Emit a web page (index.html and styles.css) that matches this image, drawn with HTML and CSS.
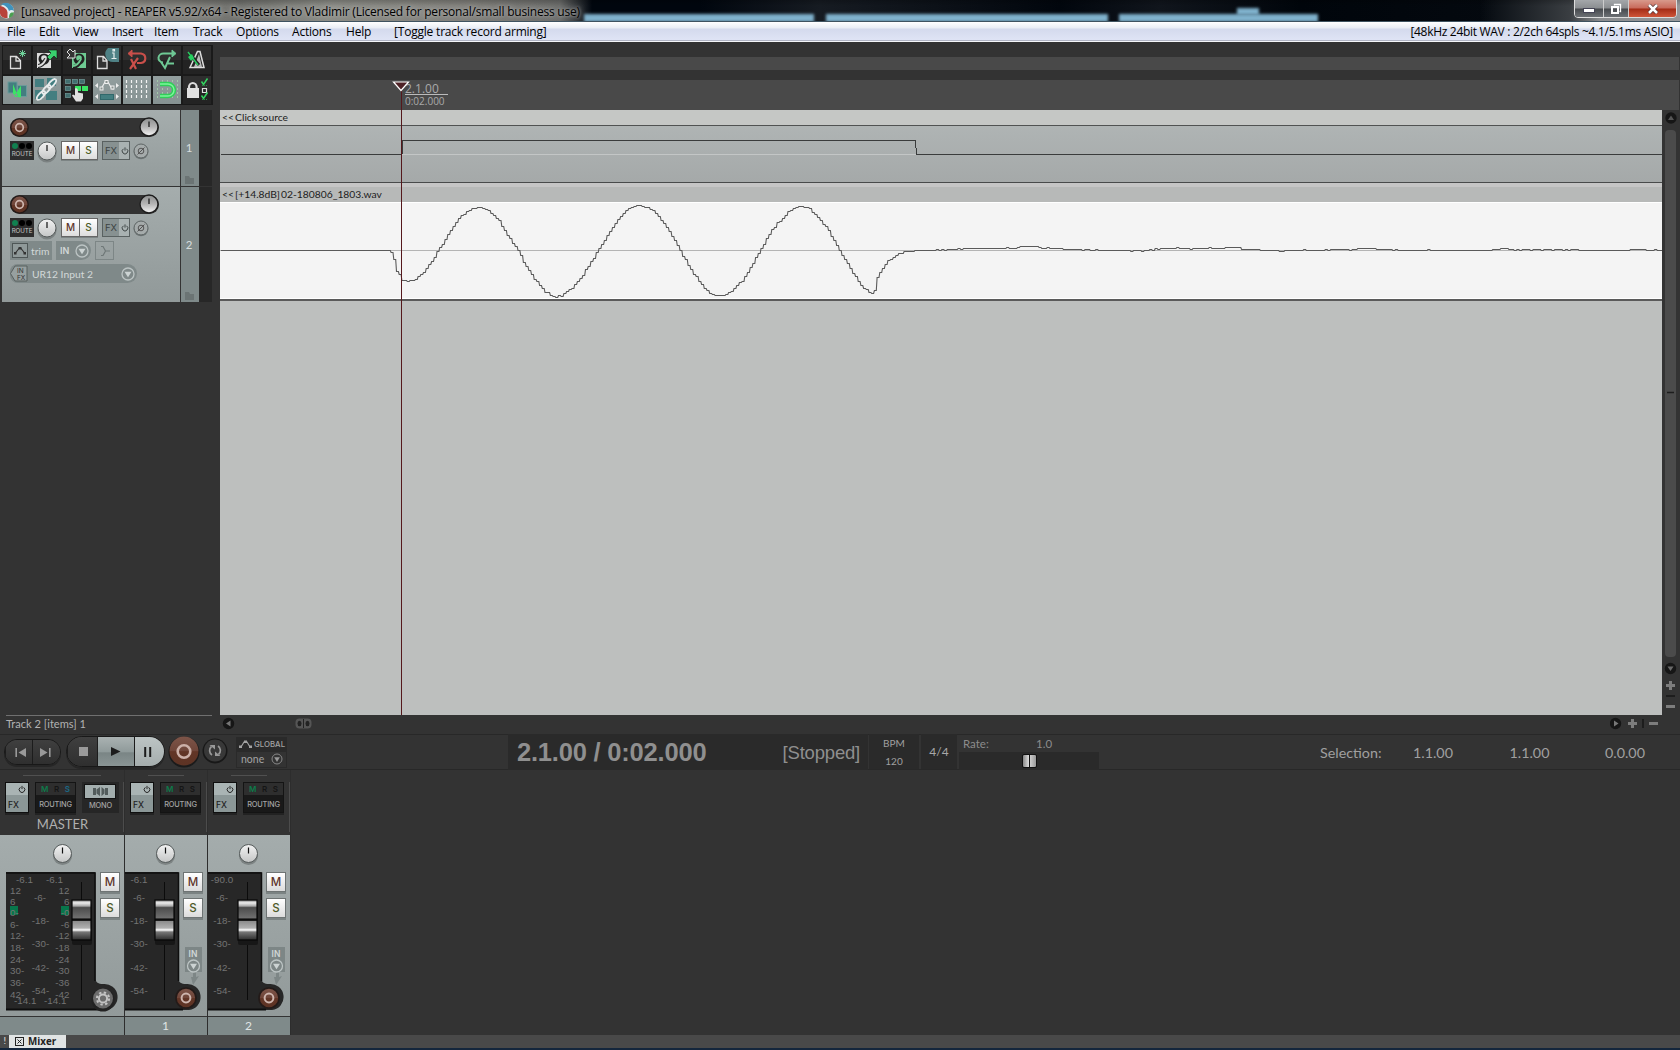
FILE: index.html
```html
<!DOCTYPE html>
<html lang="en">
<head>
<meta charset="utf-8">
<title>[unsaved project] - REAPER v5.92/x64</title>
<link rel="stylesheet" href="styles.css">
</head>
<body>
<svg class="defs" width="0" height="0">
  <defs>
    <linearGradient id="knobGrad" x1="0" y1="0" x2="0" y2="1"><stop offset="0" stop-color="#f2f2f2"/><stop offset="1" stop-color="#c4c6c6"/></linearGradient>
    <linearGradient id="volGrad" x1="0" y1="0" x2="0" y2="1"><stop offset="0" stop-color="#8d8f8f"/><stop offset=".5" stop-color="#b5b5b5"/><stop offset="1" stop-color="#f6f6f6"/></linearGradient>
    <linearGradient id="recGrad" x1="0" y1="0" x2="0" y2="1"><stop offset="0" stop-color="#7d5549"/><stop offset=".5" stop-color="#6f4539"/><stop offset=".52" stop-color="#623526"/><stop offset="1" stop-color="#5d3324"/></linearGradient>
    <linearGradient id="fadGrad" x1="0" y1="0" x2="0" y2="1"><stop offset="0" stop-color="#777"/><stop offset=".07" stop-color="#eee"/><stop offset=".15" stop-color="#aaa"/><stop offset=".19" stop-color="#4c4c4c"/><stop offset=".44" stop-color="#6e6e6e"/><stop offset=".48" stop-color="#0c0c0c"/><stop offset=".51" stop-color="#0c0c0c"/><stop offset=".53" stop-color="#8c8c8c"/><stop offset=".7" stop-color="#b0b0b0"/><stop offset=".75" stop-color="#fff"/><stop offset=".8" stop-color="#777"/><stop offset="1" stop-color="#2c2c2c"/></linearGradient>
    <symbol id="knob" viewBox="0 0 20 22"><ellipse cx="10" cy="12" rx="9.6" ry="9.6" fill="#6d7474" opacity=".7"/><circle cx="10" cy="10" r="9" fill="url(#knobGrad)" stroke="#555b5b"/><path d="M10 4v6" stroke="#111" stroke-width="1.2"/></symbol>
    <symbol id="volknob" viewBox="0 0 20 22"><circle cx="10" cy="10" r="9" fill="url(#volGrad)" stroke="#1d1d1d" stroke-width="1.4"/><path d="M10 4.500v5.500" stroke="#111" stroke-width="1.2"/></symbol>
    <symbol id="rec" viewBox="0 0 22 22"><circle cx="11" cy="11" r="10" fill="url(#recGrad)" stroke="#231a18" stroke-width="1.6"/><circle cx="11" cy="11" r="4.400" fill="none" stroke="#cdb5ae" stroke-width="2"/></symbol>
    <symbol id="drop" viewBox="0 0 14 14"><circle cx="7" cy="7" r="6" fill="none" stroke="#bcc4c4" stroke-width="1.300"/><path d="M3.500 4.800h7L7 10.200z" fill="#ccd3d3"/></symbol>
    <symbol id="power" viewBox="0 0 10 10"><path d="M3 2.300a3.500 3.500 0 1 0 4 0M5 .5v4" fill="none" stroke="currentColor" stroke-width="1.200"/></symbol>
    <symbol id="folder" viewBox="0 0 9 8"><path d="M0 0h4l1 2h4v6H0z" fill="#6b7474"/></symbol>
    <symbol id="fader" viewBox="0 0 22 46"><rect x="1" y="4" width="20" height="42" rx="2" fill="#171717"/><rect x="1" y="1" width="19" height="40" fill="url(#fadGrad)" stroke="#080808" stroke-width="1.200"/></symbol>
  </defs>
</svg>

<header class="titlebar">
  <svg class="logo" width="18" height="21" viewBox="0 0 18 21"><circle cx="6.500" cy="11" r="7.500" fill="#e4ecee"/><path d="M1 4.500C6 1.500 13 3 14 11c-1.500-1.500-3.500-1.500-5 0C8 7.500 5 5 1 4.500z" fill="#3f93bd"/><path d="M0 6c4 .5 7 3 7.500 6.500V18C3 18.500 0 16 0 13z" fill="#b8433a"/><path d="M9 18c0-4 1-6 5-5.500-.5 3-2 5-5 5.500z" fill="#4a9e50"/></svg>
  <span class="title">[unsaved project] - REAPER v5.92/x64 - Registered to Vladimir (Licensed for personal/small business use)</span>
  <i class="glow g1"></i><i class="glow g2"></i><i class="glow g3"></i><i class="glow g4"></i>
  <div class="wincontrols">
    <b class="wmin"><svg width="12" height="6"><rect x=".5" y=".5" width="11" height="4" fill="#fff" stroke="#445"/></svg></b>
    <b class="wmax"><svg width="12" height="12"><path d="M4.500 2.500V1.500h6v7h-1" fill="none" stroke="#fff" stroke-width="1.300"/><rect x="2" y="4" width="6" height="6" fill="none" stroke="#fff" stroke-width="2"/></svg></b>
    <b class="wclose"><svg width="12" height="10"><path d="M2 1l8 8M10 1l-8 8" stroke="#533" stroke-width="4"/><path d="M2 1l8 8M10 1l-8 8" stroke="#fff" stroke-width="2.500"/></svg></b>
  </div>
</header>

<nav class="menubar">
  <span class="m1">File</span><span class="m2">Edit</span><span class="m3">View</span><span class="m4">Insert</span><span class="m5">Item</span><span class="m6">Track</span><span class="m7">Options</span><span class="m8">Actions</span><span class="m9">Help</span><span class="m10">[Toggle track record arming]</span>
  <span class="audio">[48kHz 24bit WAV : 2/2ch 64spls ~4.1/5.1ms ASIO]</span>
</nav>

<main class="workspace">
  <aside class="left">
    <div class="toolbar">
      <b><svg viewBox="0 0 28 28"><path d="M7.500 10.500h6l4 4v8h-10zM13 10.500v4.500h4.500" fill="#333" stroke="#ddd" stroke-width="1.300"/><path d="M19.500 4v7M16 7.500h7M17 5l5 5M22 5l-5 5" stroke="#6fd39a"/></svg></b>
      <b><svg viewBox="0 0 28 28"><path d="M4 7h14v15H4z" fill="#ddd"/><circle cx="11" cy="13" r="5.500" fill="#222"/><circle cx="11" cy="12" r="2.800" fill="#ddd"/><path d="M5 20c3 0 6-3 8-7" stroke="#222" stroke-width="4" fill="none"/><path d="M5 20c3 0 6-3 8-7" stroke="#ddd" stroke-width="1.800" fill="none"/><path d="M15 4h9v9l-3-3-4 4-3-3 4-4z" fill="#39d06e" stroke="#111" stroke-width=".6"/></svg></b>
      <b><svg viewBox="0 0 28 28"><path d="M9 7h14v15H9z" fill="#6ecb92"/><circle cx="16" cy="13" r="5.500" fill="#222"/><circle cx="16" cy="12" r="2.800" fill="#6ecb92"/><path d="M10 21c3 0 6-3 8-7" stroke="#222" stroke-width="4" fill="none"/><path d="M10 20c3 0 6-3 8-7" stroke="#6ecb92" stroke-width="1.800" fill="none"/><path d="M12 4v8H4l3-3-3-3 3-3 3 3z" fill="#333" stroke="#ddd"/></svg></b>
      <b><svg viewBox="0 0 28 28"><path d="M4.500 10.500h6l3.500 4v8H4.500zM10 10.500v4.500h4" fill="#333" stroke="#ddd" stroke-width="1.300"/><path d="M26 2v14h-6a8 8 0 0 1-5-14z" fill="#4f8185"/><path d="M19 7h2v5M18.500 12.500h5M20 3.500h1.500v1.500H20z" stroke="#e5eeee" stroke-width="1.200" fill="none"/></svg></b>
      <b><svg viewBox="0 0 28 28"><path d="M6 7.500h12a5 4.800 0 0 1 0 9.500h-4" fill="none" stroke="#c94f4a" stroke-width="2.200"/><path d="M9 4v7L5 7.500z" fill="#c94f4a" stroke="#c94f4a"/><path d="M8 13l5 10M15 12L7 23" stroke="#c94f4a" stroke-width="2.200"/></svg></b>
      <b><svg viewBox="0 0 28 28"><path d="M21 7.500H11a5 4.500 0 0 0-1 9M8 16l4 6 5-11M15 17.500h6" fill="none" stroke="#6fc995" stroke-width="2"/><path d="M19 4v7l4-3.500z" fill="#6fc995" stroke="#6fc995"/></svg></b>
      <b><svg viewBox="0 0 28 28"><path d="M7 21.500L14.500 5.500h2.500l4 16z" fill="none" stroke="#ddd" stroke-width="1.500"/><path d="M11 21l5-13 3 13z" fill="#bbb"/><path d="M6 7l10 12" stroke="#222" stroke-width="3"/><path d="M5 6l10 13" stroke="#27d060" stroke-width="1.400"/><path d="M5 11l4-3 2 4-3 3z" fill="#27d060"/></svg></b>
      <b class="on"><svg viewBox="0 0 28 28"><rect x="5" y="6" width="9" height="11" fill="#437e80" stroke="#6b9a9a"/><rect x="14.500" y="9.500" width="9" height="11" fill="#437e80" stroke="#6b9a9a"/><path d="M10 8v10l5 2.500zM11 20.500l7-11v12z" fill="#3be564"/></svg></b>
      <b class="on"><svg viewBox="0 0 28 28"><g fill="#437e80"><rect x="2" y="3" width="9" height="8"/><rect x="14" y="2" width="9" height="8"/><rect x="2" y="14" width="8" height="9"/><rect x="13" y="15" width="11" height="9"/></g><g fill="none" stroke="#e7ecec" stroke-width="1.800"><ellipse cx="8" cy="19.500" rx="5.500" ry="2.300" transform="rotate(-48 8 19.500)"/><ellipse cx="13.500" cy="13.500" rx="5.500" ry="2.300" transform="rotate(-48 13.500 13.500)"/><ellipse cx="19" cy="7.500" rx="5.500" ry="2.300" transform="rotate(-48 19 7.500)"/></g></svg></b>
      <b><svg viewBox="0 0 28 28"><g fill="#426f70" stroke="#719c9a" stroke-width=".7"><rect x="2.500" y="3.500" width="5" height="4"/><rect x="9.500" y="3.500" width="5" height="4"/><rect x="16.500" y="3.500" width="5" height="4"/><rect x="2.500" y="10.500" width="5" height="4"/><rect x="2.500" y="17.500" width="5" height="4"/></g><rect x="12" y="10" width="6" height="5" fill="#3be564"/><rect x="19" y="10" width="6" height="5" fill="#3be564"/><path d="M12 12.500c2-1 3 0 3 4l5 1v5l-2 3h-5l-4-6 1-1 2 1z" fill="#e0e0e0"/></svg></b>
      <b class="on"><svg viewBox="0 0 28 28"><path d="M8 13l4-7h3l4 7h2" fill="none" stroke="#eee" stroke-width="1.200"/><g fill="#89928f" stroke="#eee"><rect x="7" y="11" width="3" height="3"/><rect x="12" y="4.500" width="3" height="3"/><rect x="18" y="10" width="3" height="3"/></g><rect x="7.500" y="18.500" width="13" height="5" fill="#437e80" stroke="#31686b"/><path d="M5 7v5L2 9.500zM5 18v5l-3-2.500zM23 7v5l3-2.500zM23 18v5l3-2.500z" fill="#eee"/></svg></b>
      <b class="on"><svg viewBox="0 0 28 28"><path d="M3.500 4v20M8.500 4v20M13.500 4v20M18.500 4v20M23.500 4v20" stroke="#f4f4f4" stroke-width="1.200" stroke-dasharray="3 2"/></svg></b>
      <b class="on"><svg viewBox="0 0 28 28"><path d="M4.500 4v20M9.500 4v20M14.500 4v20M19.500 4v20M24.500 4v20" stroke="#a2c8a9" stroke-dasharray="2 2"/><path d="M7 8h8a6 6 0 0 1 0 12H7" fill="none" stroke="#2fcf58" stroke-width="4.500"/><path d="M7 8h8a6 6 0 0 1 0 12H7" fill="none" stroke="#7df59a" stroke-width="1.500"/></svg></b>
      <b><svg viewBox="0 0 28 28"><path d="M6 13v-2a3.800 4 0 0 1 7.600 0v2" fill="none" stroke="#ddd" stroke-width="2.200"/><rect x="4" y="12" width="12" height="10" fill="#e0e0e0"/><path d="M19.500 12.500h4v4h-4z" fill="none" stroke="#ddd" stroke-width="1.200"/><path d="M18.500 5.500l2 3 4-6M18.500 19.500l2 3 4-6" fill="none" stroke="#33d45f" stroke-width="1.500"/><path d="M19 9.500h5M19 23.500h5" stroke="#2b8a45" stroke-dasharray="1 1"/></svg></b>
    </div>

    <section class="track t1">
      <div class="tpanel">
        <div class="volbar"><svg class="recb" width="19" height="19"><use href="#rec"/></svg><svg class="volk" width="20" height="22"><use href="#volknob"/></svg></div>
        <div class="row">
          <div class="route"><div><i class="lit"></i><i></i><i></i></div><span>ROUTE</span></div>
          <svg class="pan" width="20" height="22"><use href="#knob"/></svg>
          <div class="ms"><b class="mute">M</b><b class="solo">S</b></div>
          <div class="fx"><span>FX</span><svg width="9" height="9"><use href="#power"/></svg></div>
          <svg class="phase" width="16" height="17"><circle cx="8" cy="9" r="7.300" fill="#717878"/><circle cx="8" cy="8" r="7" fill="#a5abab" stroke="#5d6464"/><circle cx="8" cy="8" r="2.800" fill="none" stroke="#555"/><path d="M4.500 11.500l7-7" stroke="#555"/></svg>
        </div>
      </div>
      <div class="tnum"><span>1</span><svg width="9" height="8"><use href="#folder"/></svg></div>
      <div class="tmeter"></div>
    </section>
    <section class="track t2">
      <div class="tpanel">
        <div class="volbar"><svg class="recb" width="19" height="19"><use href="#rec"/></svg><svg class="volk" width="20" height="22"><use href="#volknob"/></svg></div>
        <div class="row">
          <div class="route"><div><i class="lit"></i><i></i><i></i></div><span>ROUTE</span></div>
          <svg class="pan" width="20" height="22"><use href="#knob"/></svg>
          <div class="ms"><b class="mute">M</b><b class="solo">S</b></div>
          <div class="fx"><span>FX</span><svg width="9" height="9"><use href="#power"/></svg></div>
          <svg class="phase" width="16" height="17"><circle cx="8" cy="9" r="7.300" fill="#717878"/><circle cx="8" cy="8" r="7" fill="#a5abab" stroke="#5d6464"/><circle cx="8" cy="8" r="2.800" fill="none" stroke="#555"/><path d="M4.500 11.500l7-7" stroke="#555"/></svg>
        </div>
        <div class="row envrow">
          <div class="trim"><svg width="16" height="15"><rect x=".5" y=".5" width="15" height="14" fill="#8f9999" stroke="#4e5656"/><path d="M3 10.500L7 5.500h2L13 10.500" fill="none" stroke="#333" stroke-width="1.200"/><path d="M2 9h2.500v2.500H2zM6.500 4h3v2.500h-3zM11.500 9H14v2.500h-2.500z" fill="#333"/></svg><span>trim</span></div>
          <div class="inmon"><span>IN</span><svg width="14" height="14"><use href="#drop"/></svg></div>
          <div class="recmode"><svg width="10" height="12"><path d="M0 1.500h2l2.500 4.500L2 10.500H0M4.500 6H9" fill="none" stroke="#6f7878" stroke-width="1.200"/></svg></div>
        </div>
        <div class="inputsel"><svg width="18" height="17"><path d="M5 1h12v15H5L.5 8.500z" fill="#97a0a0" stroke="#59605f"/><text x="7" y="8" class="tiny">IN</text><text x="7" y="15" class="tiny">FX</text></svg><span>UR12 Input 2</span><svg width="14" height="14"><use href="#drop"/></svg></div>
      </div>
      <div class="tnum"><span>2</span><svg width="9" height="8"><use href="#folder"/></svg></div>
      <div class="tmeter"></div>
    </section>
  </aside>

  <section class="arrange">
    <div class="regionbar"></div>
    <div class="ruler"><div class="mark"><span>2.1.00</span><em>0:02.000</em></div></div>
    <div class="lanes">
      <div class="items">
        <div class="ihead h1">&lt;&lt; Click source</div>
        <svg class="wave1" width="1442" height="57" shape-rendering="crispEdges"><path d="M182 28.500H697" stroke="#c3c6c6"/><path d="M1 28.500H181.500M182.500 28V14.500H695.500L696.500 28.500H1442" fill="none" stroke="#3a3c3c"/></svg>
        <div class="ihead h2">&lt;&lt; [+14.8dB] 02-180806_1803.wav</div>
        <svg class="wave2" width="1442" height="96"><path d="M0 47.500H1442" stroke="#b4b4b4"/><polyline id="take" transform="translate(0 -.5)" fill="none" stroke="#5a5a5a" stroke-width="1.100"/></svg>
        <i class="cursor"></i>
        <svg class="head" width="19" height="12"><path d="M1.500 1h15L9 9.500z" fill="#4e2226" stroke="#fff" stroke-width="1.200"/></svg>
      </div>
      <div class="vscroll">
        <svg width="18" height="605"><circle cx="9" cy="8" r="5.700" fill="#161616"/><path d="M9 5.500l3 4.500H6z" fill="#555"/><rect x="3" y="20" width="11" height="527" rx="4" fill="#4b4b4b"/><path d="M5 282.500h7" stroke="#1d1d1d" stroke-width="1.500"/><circle cx="8.500" cy="558.500" r="5.700" fill="#161616"/><path d="M5.500 556.500h6l-3 4.500z" fill="#6a6a6a"/><path d="M4 575.500h9M8.500 571v9" stroke="#7d7d7d" stroke-width="3"/><path d="M4 586h9" stroke="#1d1d1d" stroke-width="2"/><path d="M4 596.500h9" stroke="#7d7d7d" stroke-width="3"/></svg>
      </div>
    </div>
  </section>
</main>

<div class="statusrow">
  <div class="status"><span>Track 2 [items] 1</span></div>
  <svg class="hs-left" width="100" height="18"><circle cx="8.500" cy="8.500" r="5.700" fill="#161616"/><path d="M10.500 5.500v6l-4.500-3z" fill="#777"/><rect x="75.500" y="3.500" width="16" height="10" rx="4" fill="#555"/><path d="M83.500 4v9" stroke="#222"/><ellipse cx="79.500" cy="8.500" rx="2" ry="2.700" fill="#222"/><ellipse cx="87.500" cy="8.500" rx="2" ry="2.700" fill="#222"/></svg>
  <svg class="hs-right" width="60" height="18"><circle cx="5.500" cy="8.500" r="5.700" fill="#161616"/><path d="M4 5.500v6l4.500-3z" fill="#777"/><path d="M18 8.500h9M22.500 4v9" stroke="#7d7d7d" stroke-width="3"/><path d="M33 4v9" stroke="#1d1d1d" stroke-width="2"/><path d="M39 8.500h9" stroke="#7d7d7d" stroke-width="3"/></svg>
</div>

<section class="transport">
  <div class="pill nav"><b><svg width="12" height="11"><path d="M1.200 1v9" stroke="#999" stroke-width="1.600"/><path d="M11 1v9L3.500 5.500z" fill="#999"/></svg></b><b><svg width="12" height="11"><path d="M10.800 1v9" stroke="#999" stroke-width="1.600"/><path d="M1 1v9l7.500-4.500z" fill="#999"/></svg></b></div>
  <div class="pill play"><b class="stop"><i></i></b><b class="go"><svg width="10" height="9"><path d="M0 0v9l9.500-4.500z" fill="#1c1c1c"/></svg></b><b class="pause"><svg width="8" height="10"><path d="M1.200 0v10M6.200 0v10" stroke="#1c1c1c" stroke-width="2"/></svg></b></div>
  <svg class="bigrec" width="32" height="34"><circle cx="16" cy="17" r="15.500" fill="#1b1b1b"/><circle cx="16" cy="16" r="14.500" fill="url(#recGrad)"/><circle cx="16" cy="16.500" r="6.300" fill="none" stroke="#ccb0a8" stroke-width="2.600"/></svg>
  <svg class="loop" width="26" height="28"><circle cx="13" cy="14" r="12.500" fill="#181818"/><circle cx="13" cy="13.500" r="11" fill="#383838"/><path d="M10 18a5.300 5.300 0 0 1-.5-8.500M16 9a5.300 5.300 0 0 1 .5 8.500" fill="none" stroke="#999" stroke-width="1.700"/><path d="M7.500 8h5.500v4.500zM18.500 19h-5.500v-4.500z" fill="#999"/></svg>
  <div class="global"><div><svg width="13" height="9"><path d="M2 7l3-5h3l3 5" fill="none" stroke="#a3a3a3" stroke-width="1.200"/><path d="M0 5.500h3V8H0zM5 .5h3V3H5zM10 5.500h3V8h-3z" fill="#a3a3a3"/></svg><b>GLOBAL</b></div><div class="gsel"><span>none</span><svg width="12" height="12"><circle cx="6" cy="6" r="5" fill="none" stroke="#888"/><path d="M3.200 4.200h5.600L6 9z" fill="#999"/></svg></div></div>
  <div class="display"><b>2.1.00 / 0:02.000</b><span>[Stopped]</span></div>
  <div class="bpm"><span>BPM</span><span>120</span></div>
  <div class="sig">4/4</div>
  <div class="rate"><div class="rlabels"><span>Rate:</span><span>1.0</span></div><div class="rslider"><i></i></div></div>
  <div class="selection"><span class="s0">Selection:</span><span class="s1">1.1.00</span><span class="s2">1.1.00</span><span class="s3">0.0.00</span></div>
</section>

<section class="mixer">
  <div class="strip master">
    <div class="top">
      <div class="fxb"><svg width="9" height="9"><use href="#power"/></svg><span>FX</span></div>
      <div class="routing"><div><i class="g">M</i><i>R</i><i class="bl">S</i></div><span>ROUTING</span></div>
      <div class="mono"><svg width="32" height="15"><rect x=".5" y=".5" width="31" height="14" fill="#a3aeae" stroke="#131313"/><path d="M9 4h3v7H9zM12.500 5.500L16 3v9l-3.500-2.500zM24 4h-3v7h3zM20.500 5.500L17.500 3v9l3-2.500z" fill="#525b5b"/></svg><span>MONO</span></div>
      <h3>MASTER</h3>
    </div>
    <div class="body">
      <svg class="console" width="124" height="181">
        <path d="M6 37H94.500q1 0 1 1v106c0 3 3 5 7.500 5a13 13 0 0 1 3 26H6z" fill="#272727"/><path d="M6 38H95v108" fill="none" stroke="#0e0e0e" stroke-width="1.500"/><path d="M6 174.500h94" stroke="#0e0e0e" stroke-width="2"/>
        <rect x="10" y="71" width="8" height="9" fill="#08764b"/><rect x="61" y="71" width="8" height="9" fill="#08764b"/>
        <g class="scale"><text x="16" y="48">-6.1</text><text x="46" y="48">-6.1</text><text x="10" y="59">12</text><text x="10" y="70">6</text><text x="10" y="81">0-</text><text x="10" y="93">6-</text><text x="10" y="104">12-</text><text x="10" y="116">18-</text><text x="10" y="128">24-</text><text x="10" y="139">30-</text><text x="10" y="151">36-</text><text x="10" y="163">42-</text><text x="14" y="169">-14.1</text><text x="44" y="169">-14.1</text></g>
        <g class="scale mid"><text x="40" y="66">-6-</text><text x="40.500" y="89">-18-</text><text x="40.500" y="112">-30-</text><text x="40.500" y="136">-42-</text><text x="40.500" y="159">-54-</text></g>
        <g class="scale end"><text x="69.500" y="59">12</text><text x="69.500" y="70">6</text><text x="69.500" y="81">-0</text><text x="69.500" y="93">-6</text><text x="69.500" y="104">-12</text><text x="69.500" y="116">-18</text><text x="69.500" y="128">-24</text><text x="69.500" y="139">-30</text><text x="69.500" y="151">-36</text><text x="69.500" y="163">-42</text></g>
        <path d="M81.500 47v118" stroke="#0b0b0b"/><use href="#fader" x="71" y="64" width="22" height="46"/><use href="#knob" x="52.500" y="8.500" width="20" height="22"/>
        <circle cx="103" cy="165" r="11.500" fill="#222"/><circle cx="103" cy="163.500" r="10" fill="#6c6c6c"/><circle cx="103" cy="163.500" r="4.100" fill="none" stroke="#c4c4c4" stroke-width="2"/><circle cx="103" cy="163.500" r="6.100" fill="none" stroke="#c4c4c4" stroke-width="2" stroke-dasharray="2.400 2.390"/>
      </svg>
      <b class="mb mute">M</b><b class="mb solo">S</b>
    </div>
    <div class="foot"></div>
  </div>
  <div class="strip">
    <div class="top">
      <div class="fxb"><svg width="9" height="9"><use href="#power"/></svg><span>FX</span></div>
      <div class="routing"><div><i class="g">M</i><i>R</i><i>S</i></div><span>ROUTING</span></div>
    </div>
    <div class="body">
      <svg class="console" width="82" height="181">
        <path d="M0 37H53.500v107c0 3 3 5 7.500 5a13 13 0 0 1 3 26H0z" fill="#272727"/><path d="M0 38H53.500v108" fill="none" stroke="#0e0e0e" stroke-width="1.500"/><path d="M0 174.500h58" stroke="#0e0e0e" stroke-width="2"/>
        <g class="scale mid"><text x="14" y="48">-6.1</text><text x="14" y="66">-6-</text><text x="14" y="89">-18-</text><text x="14" y="112">-30-</text><text x="14" y="136">-42-</text><text x="14" y="159">-54-</text></g>
        <path d="M39.500 47v118" stroke="#0b0b0b"/><use href="#fader" x="29" y="64" width="22" height="46"/><use href="#knob" x="30.500" y="8.500" width="20" height="22"/>
        <path d="M60 112h17v25h-6v5l3-1-6 9-2-8h2v-5h-8z" fill="#7d8686"/><text x="68" y="122" class="intext">IN</text><use href="#drop" x="61.500" y="124" width="14" height="14"/>
        <use href="#rec" x="50" y="152" width="22" height="22"/>
      </svg>
      <b class="mb mute">M</b><b class="mb solo">S</b>
    </div>
    <div class="foot">1</div>
  </div>
  <div class="strip">
    <div class="top">
      <div class="fxb"><svg width="9" height="9"><use href="#power"/></svg><span>FX</span></div>
      <div class="routing"><div><i class="g">M</i><i>R</i><i>S</i></div><span>ROUTING</span></div>
    </div>
    <div class="body">
      <svg class="console" width="82" height="181">
        <path d="M0 37H53.500v107c0 3 3 5 7.500 5a13 13 0 0 1 3 26H0z" fill="#272727"/><path d="M0 38H53.500v108" fill="none" stroke="#0e0e0e" stroke-width="1.500"/><path d="M0 174.500h58" stroke="#0e0e0e" stroke-width="2"/>
        <g class="scale mid"><text x="14" y="48">-90.0</text><text x="14" y="66">-6-</text><text x="14" y="89">-18-</text><text x="14" y="112">-30-</text><text x="14" y="136">-42-</text><text x="14" y="159">-54-</text></g>
        <path d="M39.500 47v118" stroke="#0b0b0b"/><use href="#fader" x="29" y="64" width="22" height="46"/><use href="#knob" x="30.500" y="8.500" width="20" height="22"/>
        <path d="M60 112h17v25h-6v5l3-1-6 9-2-8h2v-5h-8z" fill="#7d8686"/><text x="68" y="122" class="intext">IN</text><use href="#drop" x="61.500" y="124" width="14" height="14"/>
        <use href="#rec" x="50" y="152" width="22" height="22"/>
      </svg>
      <b class="mb mute">M</b><b class="mb solo">S</b>
    </div>
    <div class="foot">2</div>
  </div>
</section>

<footer class="dock"><span class="bang">!</span><div class="tab"><svg width="9" height="9"><rect x=".5" y=".5" width="8" height="8" fill="none" stroke="#222"/><path d="M2.500 2.500l4 4M6.500 2.500l-4 4" stroke="#222"/></svg><b>Mixer</b></div></footer>
<script src="wave.js"></script>
</body>
</html>
```

FILE: wave.js
```js
// Peaks of the take: [x, y] key points inside the item, resampled to audio steps.
const keys = [[1,48],[52,48],[138,48],[168,48],[171,50],[173,52],[175,63],[177,71],[180,73],[182,78],[188,79],[193,78],[198,75],[204,69],[211,60],[218,48],[225,37],[233,24],[241,13],[247,9],[253,5.5],[258,5],[264,6],[270,10],[274,13],[280,20],[288,34],[298,48],[306,64],[315,78],[325,89],[331,93.5],[337,95],[342,92.500],[350,87],[360,76],[370,61],[378,48],[388,32],[394,22],[402,12],[410,5],[418,3],[424,4],[433,8],[439,15],[448,27],[454,37],[460,48],[470,66],[480,80],[487,89],[493,92],[499,93.5],[507,92],[515,85],[524,76],[533,60],[540,48],[551,28],[563,15],[571,7],[580,4],[588,5],[596,13],[607,26],[616,42],[620,49],[628,62],[638,79],[644,86],[649,90],[652,91],[655,87],[656,78],[659,71],[664,63],[670,57],[676,53],[683,49.500],[690,49],[697,48.400],[715,47.700],[737,47],[740,46.300],[767,46],[797,45.500],[800,44],[816,44],[820,45.500],[840,46],[846,47],[870,47.500],[890,48],[925,48.300],[938,46.500],[957,45.500],[970,46.500],[980,46],[990,45.500],[1000,46],[1007,44.500],[1019,45.500],[1023,47],[1038,47.300],[1050,48.300],[1062,48.500],[1076,48],[1083,47.500],[1090,48],[1110,47.500],[1122,46.500],[1130,47.500],[1138,46],[1153,46],[1158,47],[1175,47.400],[1180,48],[1204,48],[1207,47.400],[1210,48],[1270,48],[1273,46],[1276,47],[1284,46],[1292,47.500],[1325,47.400],[1340,47.400],[1358,47.300],[1361,48],[1406,48],[1410,47],[1424,47.200],[1427,48],[1436,47.400],[1440,48],[1442,48]];
const points = [];
let k = 0;
for (let x = 1, n = 0; x <= 1442; x += 2.7, n++) {
  while (k < keys.length - 2 && keys[k + 1][0] < x) k++;
  const [x0, y0] = keys[k];
  const [x1, y1] = keys[k + 1];
  const swing = Math.abs(y1 - y0) > 1.5 ? 0.9 : 0.35;
  const grain = swing * Math.sin(n * 2.4) * Math.cos(n * 0.7);
  const y = Math.round(y0 + (y1 - y0) * (x - x0) / (x1 - x0) + grain);
  points.push(x.toFixed(1) + ',' + y, (x + 1.9).toFixed(1) + ',' + y);
}
document.getElementById('take').setAttribute('points', points.join(' '));
```

FILE: styles.css
```css
* { box-sizing: border-box; margin: 0; padding: 0; }
body { width: 1680px; height: 1050px; overflow: hidden; background: #333; display: flex; flex-direction: column; font-family: Lato, "Liberation Sans", sans-serif; font-size: 12px; color: #a8a8a8; }
svg { display: block; flex: none; }
i, em { font-style: normal; }
.defs { position: absolute; }
span, b { white-space: nowrap; }

/* title bar */
.titlebar { flex: none; height: 22px; position: relative; display: flex; align-items: center; overflow: hidden; border-bottom: 1px solid #3f5360;
  background: linear-gradient(#0003, #0000 6px), linear-gradient(90deg, transparent 1480px, #3a3e42 1570px, #8a8c8e 1600px, #96989a 1680px), linear-gradient(90deg, #81817c 0, #8f8d86 120px, #6f706c 240px, #8b8c86 330px, #807f7a 470px, #6b6c6a 560px, #00060e 592px, #00060e 700px, #161b22 820px, #01060d 1060px, #10151c 1160px, #00050b 1300px, #04090f 1500px); }
.title { margin-left: 3px; font: 12px "Open Sans", sans-serif; letter-spacing: -.21px; color: #000; text-shadow: 0 0 6px #bbb, 0 0 3px #aaa; position: relative; z-index: 1; margin-top: 1px; }
.glow { position: absolute; bottom: -1px; height: 8px; background: #7fb1cc; filter: blur(1.500px); }
.g1 { left: 584px; width: 230px; } .g2 { left: 826px; width: 282px; } .g3 { left: 1119px; width: 199px; }
.g4 { left: 1237px; width: 22px; top: 8px; height: 7px; }
.wincontrols { position: absolute; right: 3px; top: -1px; height: 19px; width: 103px; display: flex; border: 1px solid #ddd; border-radius: 0 0 4px 4px; overflow: hidden; }
.wincontrols b { display: flex; align-items: center; justify-content: center; border-right: 1px solid #ccc; background: linear-gradient(#a4a7aa 0, #8a8d90 48%, #46494d 52%, #6c7074); }
.wmin { width: 29px; padding-top: 4px; } .wmax { width: 25px; }
.wincontrols .wclose { flex: 1; border: 0; background: linear-gradient(#d89a8c, #c8695a 48%, #a32b15 52%, #cf5538); }

/* menu */
.menubar { flex: none; height: 20px; display: flex; align-items: center; font: 12px/18px "Open Sans", sans-serif; color: #000; background: linear-gradient(#fff, #e9edf5 6px, #d4daed 7px, #dfe4f5 18px, #b0b4c4 18px, #b0b4c4 19px, #f4f6fa 19px); padding: 0 7px; }
.menubar span { flex: none; letter-spacing: -.2px; }
.m1 { width: 32px; } .m2 { width: 34px; } .m3 { width: 39px; } .m4 { width: 42px; } .m5 { width: 39px; } .m6 { width: 43px; } .m7 { width: 56px; } .m8 { width: 54px; } .m9 { width: 48px; }
.menubar .audio { margin-left: auto; letter-spacing: -.3px; }

/* workspace */
.workspace { flex: none; height: 673px; display: flex; }
.left { width: 220px; padding: 3px 0 0 2px; }
.toolbar { width: 211px; height: 60px; display: grid; grid-template-columns: repeat(7, 30px); grid-template-rows: 30px 30px; background: #1a1a1a; padding-left: 1px; margin-bottom: 5px; }
.toolbar b { width: 28px; height: 28px; margin-top: 1px; background: linear-gradient(#2e2e2e 50%, #232323 50%); }
.toolbar b svg { width: 28px; height: 28px; }
.toolbar .on { background: linear-gradient(#929e9e, #869292); }
.track { width: 210px; display: flex; }
.t1 { height: 76px; margin-bottom: 1px; } .t2 { height: 115px; }
.tpanel { width: 178px; padding: 8px 0 0 8px; background: linear-gradient(#a5adad, #939b9b); }
.t2 .tpanel { background: linear-gradient(#a5adad, #919999); }
.tnum { width: 18px; margin-left: 1px; padding: 0 2px 1px 0; position: relative; display: flex; align-items: center; justify-content: center; background: #7f8a8a; color: #d7dddd; font-size: 11.500px; }
.tnum svg { position: absolute; left: 4px; bottom: 2px; }
.tmeter { flex: 1; background: #272727; }
.volbar { height: 19px; width: 149px; display: flex; justify-content: space-between; background: #333; border-radius: 10px; }
.volk { margin-top: -1px; }
.row { display: flex; height: 20px; margin-top: 4px; }
.route { width: 24px; height: 19px; background: #2e2e2e; display: flex; flex-direction: column; align-items: center; }
.route div { display: flex; gap: 1px; margin-top: 2px; height: 7px; }
.route i { width: 6px; height: 6px; border-radius: 50%; background: #000; } .route .lit { background: #118050; }
.route span { font: 6.200px/8px Inter, sans-serif; letter-spacing: -.1px; color: #c4c4c4; }
.pan { margin-left: 3px; }
.ms { margin-left: 4px; display: flex; width: 37px; height: 19px; border: 1px solid #666; background: linear-gradient(#fff, #ddd); box-shadow: 0 1px 0 #7c8484; }
.ms b { flex: 1; text-align: center; font: 500 10px/17px Inter, sans-serif; }
.ms .solo { border-left: 1px solid #666; }
.mute { color: #5d342b; } .solo { color: #4d5a28; }
.fx { margin-left: 4px; width: 28px; height: 19px; border: 1px solid #596161; background: linear-gradient(90deg, #879191 16px, #a9b2b2 16px); display: flex; align-items: center; color: #3c4343; gap: 5px; padding-left: 2px; font: 9.500px Inter, sans-serif; }
.fx span { width: 11px; }
.fx svg { width: 8px; height: 8px; }
.phase { margin: 2px 0 0 3px; }
.envrow { margin-top: 3px; height: 19px; }
.trim, .inmon { height: 19px; background: #7f8989; display: flex; align-items: center; color: #d2d8d8; }
.trim { width: 42px; padding-left: 2px; gap: 3px; font-size: 10.300px; }
.inmon { width: 35px; margin-left: 4px; border-radius: 0 10px 10px 0; padding-left: 4px; gap: 5px; font: 600 9px Inter, sans-serif; }
.inmon span { width: 10px; }
.recmode { width: 19px; height: 19px; margin-left: 4px; border: 1px solid #7d8686; padding: 3px 0 0 5px; }
.inputsel { margin-top: 4px; width: 127px; height: 19px; border-radius: 8px 10px 10px 8px; background: #7f8989; color: #d2d8d8; display: flex; align-items: center; padding-right: 2px; font-size: 10.300px; }
.inputsel span { margin-left: 4px; flex: 1; }
.tiny { font: 6.500px Inter, sans-serif; fill: #333; }

/* arrange view */
.arrange { flex: 1; padding-top: 15px; }
.regionbar { height: 13px; width: 1459px; background: #494949; margin-bottom: 10px; }
.ruler { height: 30px; width: 1459px; background: #494949; padding: 1px 0 0 185px; }
.mark { width: 43px; font: 12px/15px "Open Sans", sans-serif; color: #a9a9a9; }
.mark span { display: block; height: 14px; border-bottom: 1px solid #bbb; }
.mark em { display: block; font-size: 10px; line-height: 13px; }
.lanes { display: flex; height: 605px; }
.items { width: 1442px; height: 605px; position: relative; background: #bdbfbe; }
.ihead { color: #1c1c1c; font-size: 10.300px; line-height: 15px; height: 15px; padding-left: 2px; word-spacing: -1.500px; }
.h1 { background: #c5c7c5; }
.h2 { height: 19px; padding-top: 4px; background: linear-gradient(#c5c5c5 4px, #b7b9b8 4px); }
.wave1 { background: linear-gradient(#afb4b4, #a5a9a9); border-top: 1px solid #505252; border-bottom: 1px solid #484a4a; height: 58px; }
.wave2 { background: #f4f4f4; border-top: 1px solid #fff; border-bottom: 1px solid #fff; height: 97px; box-shadow: 0 2px 0 #5a5a5a; }
.cursor { position: absolute; left: 181px; top: -28px; width: 1px; height: 633px; background: #54181c; }
.head { position: absolute; left: 172px; top: -29px; }
.vscroll { width: 18px; }

/* status + transport */
.statusrow { flex: none; height: 20px; display: flex; border-bottom: 1px solid #282828; }
.status { width: 206px; margin-left: 6px; border-top: 1px solid #707070; line-height: 15px; font-size: 11.100px; color: #b2b2b2; }
.hs-left { margin-left: 8px; } .hs-right { margin-left: auto; margin-right: 10px; }
.transport { flex: none; height: 35px; display: flex; border-bottom: 1px solid #282828; }
.pill { display: flex; border-radius: 16px; overflow: hidden; border: 1px solid #181818; box-shadow: 0 2px 0 #262626; }
.pill b { display: flex; align-items: center; justify-content: center; background: linear-gradient(#3f3f3f, #2f2f2f); border-left: 1px solid #1c1c1c; }
.nav { width: 57px; height: 26px; margin: 4px 0 0 4px; } .nav b { flex: 1; } .nav b:first-child { padding-left: 3px; } .nav b:last-child { padding-right: 4px; }
.play { width: 99px; height: 31px; margin: 1px 0 0 5px; }
.play .stop { width: 30px; padding-left: 2px; } .stop i { width: 9px; height: 9px; background: #9a9a9a; }
.play .go { width: 37px; background: linear-gradient(#aab2b2 0, #909b9b 50%, #7a8585 55%, #8a9595); }
.play .pause { flex: 1; padding-right: 3px; background: linear-gradient(#bcc4c4, #a5adad); }
.bigrec { margin-left: 3px; } .loop { margin: 2px 0 0 2px; }
.global { margin: 2px 0 0 8px; width: 51px; height: 31px; background: #2a2a2a; color: #a3a3a3; }
.global div { display: flex; align-items: center; height: 14px; padding: 0 3px; gap: 2px; }
.global b { font: 500 7.800px Inter, sans-serif; }
.global .gsel { height: 15px; background: #333; justify-content: space-between; padding: 0 3px 2px 4px; font-size: 10.500px; margin: 1px; }
.display { margin-left: 221px; margin-top: -1px; width: 360px; height: 36px; background: #2a2a2a; display: flex; justify-content: space-between; align-items: center; padding: 0 8px 0 9px; font-family: "Liberation Sans", sans-serif; color: #8f8f8f; }
.display b { font-size: 25.500px; letter-spacing: -.2px; } .display span { font-size: 18.500px; letter-spacing: -.2px; padding-top: 2px; }
.bpm { width: 50px; margin: -1px 0 0 1px; background: #2a2a2a; text-align: center; font-size: 10px; line-height: 18px; display: flex; flex-direction: column; color: #a0a0a0; }
.sig { width: 36px; margin: -1px 2px 0 2px; background: #2a2a2a; text-align: center; line-height: 36px; font-size: 12px; }
.rate { width: 140px; }
.rlabels { display: flex; height: 17px; align-items: center; padding: 0 0 0 4px; font-size: 11.500px; color: #8c8c8c; }
.rlabels span:first-child { width: 73px; }
.rslider { height: 18px; background: #2a2a2a; padding: 2px 0 0 63px; }
.rslider i { display: block; width: 15px; height: 14px; border: 1px solid #111; border-radius: 2px; background: linear-gradient(90deg, #888, #ddd 45%, #111 46%, #111 54%, #ccc 55%, #999); }
.selection { flex: 1; display: flex; margin-left: 221px; line-height: 36px; font-size: 14.300px; color: #a0a0a0; }
.s0 { width: 93px; } .s1 { width: 96.500px; } .s2 { width: 95.500px; }

/* mixer */
.mixer { flex: none; height: 265px; display: flex; }
.strip { width: 83px; border-right: 1px solid #2d2d2d; position: relative; }
.master { width: 125px; }
.top { height: 65px; padding: 12px 0 0 5px; display: flex; flex-wrap: wrap; align-content: flex-start; position: relative; background: linear-gradient(#505050, #505050) 50% 5px / 36px 1px no-repeat, linear-gradient(#4c4c4c, #4c4c4c) 100% 12px / 1px 50px no-repeat; }
.master .top { background-size: 78px 1px, 1px 50px; }
.fxb { width: 24px; height: 31px; border: 1px solid #0f0f0f; background: linear-gradient(#a9b4b4 12px, #8b9797 12px); color: #222; display: flex; flex-direction: column; box-shadow: 0 2px 0 #222; }
.fxb svg { margin: 2px 0 0 12px; width: 8px; height: 9px; } .fxb span { font: 500 8.500px Inter, sans-serif; margin: 6px 0 0 2px; }
.routing { width: 41px; height: 31px; margin-left: 6px; border: 1px solid #141414; background: linear-gradient(#2e2e2e 12px, #191919 12px); box-shadow: 0 2px 0 #222; }
.routing div { display: flex; justify-content: space-between; padding: 0 5px; height: 12px; font: 600 8px/13px Inter, sans-serif; color: #151515; }
.routing .g { color: #0e7a4b; } .routing .bl { color: #1b6784; }
.routing span, .mono span { display: block; text-align: center; font: 500 7.400px/19px Inter, sans-serif; letter-spacing: -.2px; color: #a3a3a3; }
.mono { width: 37px; height: 31px; margin-left: 6px; background: #262626; padding: 2px 0 0 2px; }
.mono .mono span, .mono span { line-height: 13px; margin-left: -2px; }
.top h3 { width: 115px; text-align: center; font: 13px/16px Lato, sans-serif; margin-top: 3px; color: #b0b0b0; }
.body { height: 181px; position: relative; background: linear-gradient(#a4acac, #929a9a); }
.mb { position: absolute; right: 4px; width: 20px; height: 20px; border: 1px solid #6e7474; background: linear-gradient(#fff, #dcdcdc); text-align: center; font: 500 11.500px/18px Inter, sans-serif; box-shadow: 0 2px 0 #7b8383; }
.body .mute { top: 37px; } .body .solo { top: 63px; }
.foot { height: 19px; border-top: 1px solid #333; background: #7f8a8a; color: #e0e5e5; text-align: center; line-height: 18px; font-size: 12px; padding-right: 1px; }
.scale text { font: 9.800px "Liberation Sans", sans-serif; fill: #747474; }
.scale.mid text { text-anchor: middle; } .scale.end text { text-anchor: end; }
.intext { font: 600 8.500px Inter, sans-serif; fill: #d0d6d6; text-anchor: middle; }

/* docker tabs */
.dock { flex: none; height: 15px; display: flex; background: #494949; border-bottom: 2px solid #14263c; }
.bang { width: 9px; padding-left: 3px; font: 9px/12px "DejaVu Sans", sans-serif; color: #ddd; }
.tab { width: 57px; height: 13px; background: #e0e4e4; color: #222; display: flex; align-items: center; padding-left: 6px; gap: 4px; }
.tab b { font: bold 9.800px "Open Sans", sans-serif; }
```
